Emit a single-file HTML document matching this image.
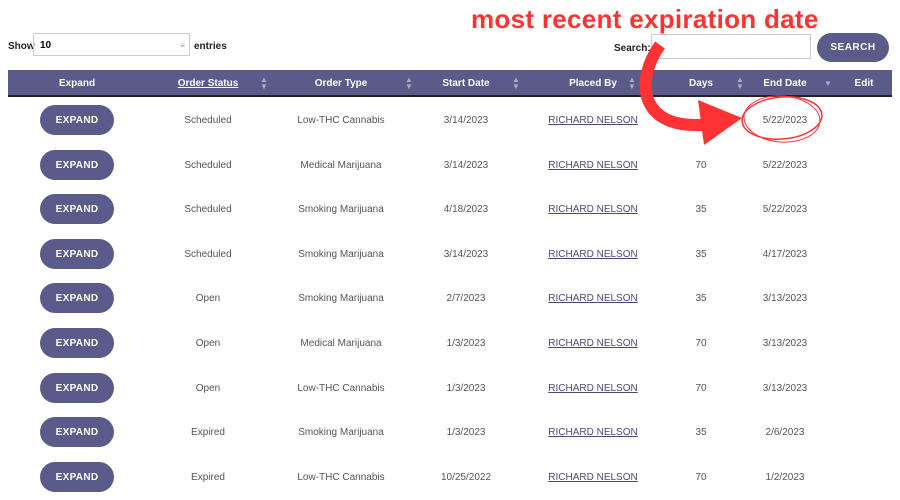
<!DOCTYPE html>
<html><head><style>
body{margin:0;width:900px;height:500px;background:#fff;font-family:"Liberation Sans",sans-serif;position:relative;overflow:hidden}
.a{position:absolute}
.hdr{left:8px;top:70px;width:884px;height:25px;background:#5a5b8a;border-bottom:2px solid #222}
.h{position:absolute;top:1px;line-height:26px;color:#fff;font-size:10px;font-weight:bold;transform:translateX(-50%);white-space:nowrap}
.s{position:absolute;top:6px;color:#aab;font-size:8px;line-height:7px;text-align:center}
.btn{position:absolute;left:40px;width:74px;height:30px;border-radius:15px;background:#5a5b8a;color:#fff;font-size:10px;font-weight:bold;text-align:center;line-height:31px;letter-spacing:.3px}
.c{position:absolute;font-size:10px;color:#555;transform:translateX(-50%);white-space:nowrap}
.u{color:#4a4a7a;text-decoration:underline}
</style></head><body>
<div class="a" style="left:8px;top:41px;font-size:10px;font-weight:bold;color:#222">Show</div>
<div class="a" style="left:33px;top:33px;width:157px;height:23px;border:1px solid #ccc;box-sizing:border-box;font-size:10px;font-weight:bold;line-height:23px;padding-left:6px">10<span style="position:absolute;right:4px;color:#999;font-size:8px">≡</span></div>
<div class="a" style="left:194px;top:41px;font-size:10px;font-weight:bold;color:#222">entries</div>
<div class="a" style="left:614px;top:43px;font-size:10px;font-weight:bold;color:#222">Search:</div>
<div class="a" style="left:651px;top:34px;width:160px;height:25px;border:1px solid #ccc;box-sizing:border-box"></div>
<div class="a" style="left:817px;top:33px;width:72px;height:29px;border-radius:15px;background:#5a5b8a;color:#fff;font-size:10px;font-weight:bold;text-align:center;line-height:30px;letter-spacing:.5px">SEARCH</div>
<div class="a" style="left:471px;top:4px;font-size:26px;font-weight:bold;color:#f33;white-space:nowrap;letter-spacing:.3px">most recent expiration date</div>
<div class="a hdr">
<div class="h" style="left:69px">Expand</div>
<div class="h" style="left:200px;text-decoration:underline">Order Status</div><div class="s" style="left:252px">▲<br>▼</div>
<div class="h" style="left:333px">Order Type</div><div class="s" style="left:397px">▲<br>▼</div>
<div class="h" style="left:458px">Start Date</div><div class="s" style="left:504px">▲<br>▼</div>
<div class="h" style="left:585px">Placed By</div><div class="s" style="left:620px">▲<br>▼</div>
<div class="h" style="left:693px">Days</div><div class="s" style="left:728px">▲<br>▼</div>
<div class="h" style="left:777px">End Date</div><div class="s" style="left:816px;top:10px">▼</div>
<div class="h" style="left:856px">Edit</div>
</div>
<div id="rows"></div>
<script>
var d=[["Scheduled","Low-THC Cannabis","3/14/2023","","5/22/2023"],["Scheduled","Medical Marijuana","3/14/2023","70","5/22/2023"],["Scheduled","Smoking Marijuana","4/18/2023","35","5/22/2023"],["Scheduled","Smoking Marijuana","3/14/2023","35","4/17/2023"],["Open","Smoking Marijuana","2/7/2023","35","3/13/2023"],["Open","Medical Marijuana","1/3/2023","70","3/13/2023"],["Open","Low-THC Cannabis","1/3/2023","70","3/13/2023"],["Expired","Smoking Marijuana","1/3/2023","35","2/6/2023"],["Expired","Low-THC Cannabis","10/25/2022","70","1/2/2023"]];
var h="";d.forEach(function(r,i){var y=120+i*44.6;
h+='<div class="btn" style="top:'+(y-15)+'px">EXPAND</div>';
var xs=[208,341,466,701,785];
h+='<div class="c" style="left:593px;top:'+(y-5)+'px"><span class="u">RICHARD NELSON</span></div>';
r.forEach(function(t,j){h+='<div class="c" style="left:'+xs[j]+'px;top:'+(y-5)+'px">'+t+'</div>'});});
document.getElementById("rows").innerHTML=h;
</script>
<svg class="a" style="left:0;top:0" width="900" height="500">
<path d="M660 45 C635 80 640 125 695 125 L705 125" fill="none" stroke="#f33" stroke-width="12"/>
<path d="M698 100 L742 118 L704 145 Z" fill="#f33"/>
<ellipse cx="782" cy="118" rx="40" ry="21" fill="none" stroke="#f33" stroke-width="1.5" transform="rotate(-5 782 118)"/>
<ellipse cx="782" cy="119" rx="38" ry="23" fill="none" stroke="#f33" stroke-width="1" transform="rotate(4 782 118)"/>
</svg>
</body></html>
